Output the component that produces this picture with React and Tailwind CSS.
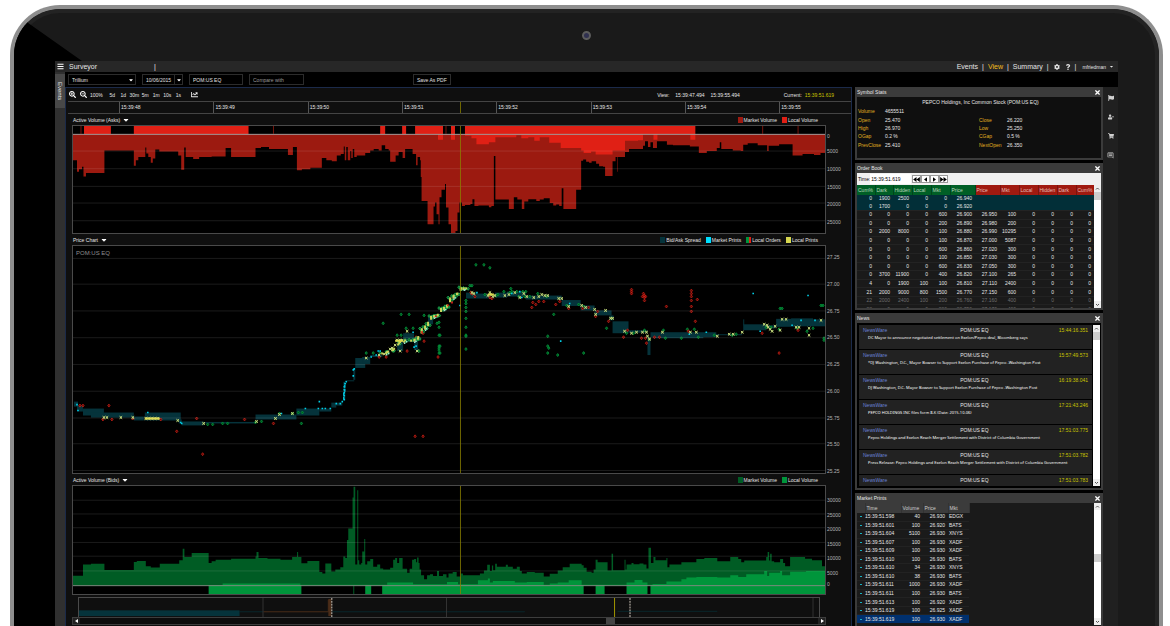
import React from "react";
import { FaSearchPlus, FaSearchMinus, FaCog, FaQuestion, FaFlag, FaUserMinus, FaShoppingCart, FaBars, FaChartLine, FaCaretDown, FaTimes } from "react-icons/fa";
import { MdOutlineInsertComment } from "react-icons/md";

const CURSOR_X = 388.5;

const ASK_MARKET = [
  0,35,4,46.5,6,44,9,41.5,10.5,51.5,13,48,31.5,25,61,40.5,63,35,65.5,31.5,72.5,22,73.5,28,75.5,31.5,78,37.5,80,33,82.5,24,86.5,26,105.5,30,108.5,44.5,111.5,22,113,31.5,120.5,33.5,126.5,31.5,139,31,153,22.5,158.5,31.5,183,22.5,188.5,21.5,196.5,23.5,215.5,29.5,220.5,21.5,224.5,45,229.5,44,238,42.5,249.5,32.5,254,35,259.5,36,264.5,30,268.5,28.5,271.5,21,272.5,35,274,21.5,275.5,35,278,25.5,279,32.5,280.5,23.5,282,31.5,284.5,30,293,27.5,298,25,301.5,23.5,306.5,25,309.5,19.5,313,23.5,316.5,25,318,36.5,323.5,30,326.5,26.5,330.5,32.5,333,23.5,340.5,28.5,344,40,345.5,31.5,348,35,348.7,52,349.5,76.5,355.5,100,361.5,82,363,78,364.5,90,366.5,100,367.5,72.5,369.5,65,373,59,374,83,376.5,100,379,109,383.5,107,385.5,88,387.5,78,390,81.5,393,80.5,398.5,79.5,400.5,74.5,402.5,81.5,406.5,81,417,82.7,419.5,81.5,422,30.5,423.5,75,437,84.5,442,72.5,445.5,75,450,84.5,452.5,77,456.5,74.5,464.5,76.5,468,75,472,73.5,478,78.5,481.5,81,484.5,80,487.5,81.5,490,63.5,491.7,84.5,504.5,65,509.5,35.5,511.5,34,514.5,36.5,517.5,37.5,520,36,524.5,38.5,527.5,41,531.5,41.5,533.5,51,541,36,544,31.5,545.5,46.5,546,31.5,553.5,26.5,557.5,23.5,571.5,20,573.5,15.5,576.5,21.5,579,16.5,581.5,22.5,585.5,15.5,595.5,19,601.5,19.5,618.5,21,627.5,27.5,635.5,25.5,645.5,22.5,648.5,16.5,650,23.5,661.5,25,669.5,25.5,672,19,676.5,17.5,686.5,19.5,696,25.5,697.5,20,708,18.5,721.5,30,731.5,28.5,743,29.5,749.5,27.5,754,8.5,
];
const ASK_LOCAL = [
  393,10,399.5,12.5,404.5,18.5,417,16.5,423.5,11.5,444.5,9.5,449.5,12.5,456.5,11.5,462.5,15,468,11.5,477.5,17,489,22.5,509.5,25,512,27.5,519.5,26,524,29,541,25,553.5,15,566.5,14.5,571.5,8.5,
];
const BID_MARKET = [
  0,91.5,10,80,18,79.3,31.5,85.5,61,77.3,64,76.3,73,81.7,78,83,87,79.3,106.5,75.5,110,64,111.7,72.3,119,68.3,136,78.3,139,76.7,143,75,158.5,74,183,71.7,184,67.3,186,73.3,195,74,208,75,219.7,72.3,224.7,67.3,225.7,72.3,229,78.7,235,76.3,247,87.7,250,89,253,79,259,87,263,85,268,82.7,271,71.7,273,73.3,274.7,55,276,43.3,280.3,11.7,281.3,0.7,283,80,285,4.3,286,75.7,287,80,289,78.3,290,66.7,292,54,293,80,295,76.7,298,74.3,301,82.3,305,80,308,84,311,85,318,83.3,321,75,323,73.3,325,78.3,327,73.3,330.5,84.3,335,88.3,337.5,84.3,340,75,342,74.3,344,77.7,345,72.7,346.5,78.3,347.5,85,349,91,352,95,355,91,358,90,361,91.7,365,86.7,367,91.7,371,90,374.5,93.3,376.5,89,380.7,87.7,384.7,92.3,388.7,89,391,91,408,89,412,86,415.3,80.3,418,86.7,420,81,421.3,85.7,423.3,79.3,425,82.3,434,80.3,436,82.3,441,84.3,445,82.3,448,86.7,450,89,455,87.7,463,88.3,472,92.3,478,89.3,486,86,491,82.7,498,79.3,510,80.7,512,83.3,515,87.3,520,88.3,522,85,524,75,526,77.7,536,86,540,69,541.5,85.7,553,75,554,85,555,80,560,78.3,562,79.7,568,79,572,80,575,84,577,63,579.5,78.3,582,72.3,584,75.7,595,73.3,596,82.7,598,80,610,77.7,625,74.3,633,73.3,646,76.7,659,72.3,667,74.3,670,77.7,673,76,695,72.3,696.5,67.3,698,76,699,69,700.5,76.7,703,77.7,709,74.3,712,78.3,714,81.7,719,72.3,734,74,741,75.7,751,81.7,754,100.7,
];
const BID_LOCAL = [
  150,99.3,228,100.7,315,98.3,341,100,375,97.7,386,100,406,96,416,94.3,418,98.3,421,96.7,443,98.3,455,97.7,472,100.7,478,99.3,486,98.3,497,96,510,100.7,555,98.3,563,95.7,571,98.3,576,100.7,581,99.7,595,97.3,610,95,615,93.3,625,92.7,646,93.3,659,91,667,92.7,675,90,693,86.7,696,91.7,698,88.3,709,86.7,711,91,719,87.3,735,86.7,754,100.7,
];

function stepPath(points, base) {
  let d = `M${points[0]} ${base}`;
  for (let i = 0; i < points.length; i += 2) d += `H${points[i]}V${points[i + 1]}`;
  return d + `V${base}Z`;
}

const SPREAD = [
  [1,157,4,5],[4,161,6,6],[10,164,21,7],[18,168,43,5],[61,172,10,4],[72,168,36,8],[106,175,3,4],[109,177,22,4],[131,177.5,52,1.5],[183,170,41,5],[224,164,23,7],[247,164,12,3],[259,158,5,5],[264,158,6,3],[271,137,2,18],[273,135.5,9,1],[281,123,2,12],[283,113,10,10],[290,112,8,7],[298,110,12,2],[325,95,6,11],[331,88,11,9],[342,95,4,10],[356,72,5,7],
  [394,47,11,6],[405,48,13,5],[423,47,12,5],[435,46,19,5],[454,50,36,4],[490,54.5,19,6],[509,60,14,5],[523,65,17,5],[538,70,4,5],[541,76,16,12],[557,85,19,2.5],[576,92,3,18],[579,87,66,5],[582,88,50,5],[645,89,26,1],[672,79,23,6],[695,80,10,3],[705,73.5,24,8],[720,73,22,6],[728,74,26,7],[672,74,1,6],
];

const CYAN = [
  [4,160],[5,166],[75,168],[108,178],[109,179],[209,169],[233,164],[247,157],[246,164],[250,164],[253,164],[258,164],[264,159],[268,159],[270,157],[272,155],[272,151],[272,148],[272,145],[272,142],[273,139],[274,137],[281,131],[281,125],[282,124],[299,112],[304,110],[306,106],[308,106],[342,102],[344,101],[341,87],[388,60],[405,47],[440,48],[448,46],[489,96],[682,48],[737,50],[730,75],[744,75],[618,89],[635,87],[450,52],[498,58],[689,86],[721,80],
];
const YELLOW = [
  [31,173],[34,173],[48,173],[60,173],[73,174],[76,174],[79,174],[82,174],[85,174],[105,176],[131,179],[184,177],[203,174],[207,170],[220,169],[294,113],[307,110],[312,109],[318,104],[320,103],[323,100],[325,95],[328,95],[330,95],[335,86],[328,106],[345,106],
  [400,47],[402,48],[416,50],[418,47],[419,49],[421,51],[423,50],[433,50],[437,49],[443,47],[448,52],[452,48],[455,51],[462,52],[467,51],[470,49],[473,50],[476,50],[487,53],[490,53],[497,61],[510,60],[514,62],[523,64],[524,69],[534,65],[539,73],[541,73],[553,86],[560,88],[565,87],[571,87],[575,87],[576,91],[578,94],[591,87],[619,87],[625,87],[646,91],[658,89],[662,89],[671,87],[693,79],[696,80],[697,82],[699,84],[701,86],[704,81],[711,74],[715,74],[725,82],[728,82],[738,83],[750,75],[738,90],[709,85],
];
const GREEN = [
  [135,180],[140,180],[150,179],[155,179],[183,178],[189,177],[207,169],[220,169],[226,168],[230,168],[229,179],[294,108],[301,108],[311,78],[325,90],[329,90],[329,69],[334,83],[337,69],[341,83],[352,70],[365,78],[367,77],[367,82],[367,90],[367,101],[367,103],[367,105],[367,108],[347,106],
  [404,19],[412,19],[418,22],[400,40],[398,40],[394,55],[394,58],[394,62],[394,66],[394,73],[394,82],[394,90],[394,91],[394,104],[432,46],[439,43],[440,46],[445,46],[451,46],[454,46],[424,50],[368,90],[368,101],[368,108],[476,91],[476,101],[477,103],[476,108],[486,110],[512,108],[482,69],[535,83],[540,73],[592,85],[594,93],[610,93],[616,84],[623,84],[627,92],[643,90],[665,89],[711,63],[709,63],[750,60],[752,60],[753,93],[753,95],[708,84],[736,86],[742,83],[495,60],[507,59],[447,51],[562,88],[578,94],[413,49],[426,49],[438,47],[453,51],[458,51],[466,48],[475,51],[512,61],[555,88],[573,85],[661,90],[695,82],[700,82],[726,83],
];
const RED = [
  [7,161],[10,161],[36,161],[30,175],[39,175],[60,174],[88,175],[104,187],[124,174],[130,210],[172,175],[201,179],[307,112],[314,112],[335,106],[344,92],[352,96],[351,88],[366,112],[343,192],[351,192],
  [399,47],[400,48],[403,51],[418,52],[420,53],[460,62],[461,57],[464,59],[467,56],[472,56],[484,59],[488,56],[497,63],[511,63],[517,62],[524,71],[526,66],[537,76],[552,92],[556,85],[570,93],[574,93],[575,98],[583,92],[588,92],[560,44],[560,46],[560,48],[572,48],[574,51],[573,50],[573,52],[573,55],[571,51],[595,61],[620,45],[620,48],[620,51],[620,55],[620,61],[620,66],[626,54],[624,76],[617,86],[691,88],[727,85],[708,108],
];

function trail() {
  const line = [[340,97],[346,92],[352,84],[357,76],[362,71],[368,67],[373,62],[378,56],[384,48],[390,44],[394,42]];
  const out = [];
  for (let i = 0; i < line.length - 1; i++) {
    const [ax, ay] = line[i];
    const [bx, by] = line[i + 1];
    for (let k = 0; k < 5; k++) {
      const t = k / 5;
      const n = (i * 7 + k * 5) % 9;
      out.push([ax + (bx - ax) * t, ay + (by - ay) * t, n]);
    }
  }
  for (let k = 0; k < 12; k++) out.push([311 + k * 2, 110 - k * 1.3, (k * 5) % 9]);
  return out;
}

const squares = (pts, s) => pts.map(([x, y]) => `M${x - s / 2} ${y - s / 2}h${s}v${s}h${-s}z`).join("");
const rings = (pts) => pts.map(([x, y]) => `M${x - 1.2} ${y}l1.2 -1.5l1.2 1.5l-1.2 1.5z`).join("");
const crosses = (pts) => pts.map(([x, y]) => `M${x - 1.3} ${y - 1.3}l2.6 2.6m0 -2.6l-2.6 2.6`).join("");

function Plot({ height, className, grid, label, children }) {
  return (
    <svg role="img" aria-label={label} viewBox={`0 0 754 ${height}`} preserveAspectRatio="none" className={`block min-w-0 flex-1 border border-[#4a4a4a] bg-black ${className}`}>
      {children}
      {grid.map((y) => <path key={y} d={`M0 ${y}H754`} stroke="#ffffff" strokeOpacity="0.11" />)}
      <path d={`M${CURSOR_X} 0V${height}`} stroke="#8a8000" strokeOpacity="0.8" />
    </svg>
  );
}

function ChartHead({ title, legend }) {
  return (
    <div className="mr-[26px] flex h-[11px] items-center justify-between">
      <button className="flex items-center gap-[2px] pl-px">
        {title}
        <FaCaretDown className="size-[8px] text-white" />
      </button>
      <ul className="flex gap-[5px] pr-[7px]">
        {legend.map(([name, swatch]) => (
          <li key={name} className="flex items-center gap-px">
            <span className={`h-[6px] w-[5px] ${swatch}`} />
            {name}
          </li>
        ))}
      </ul>
    </div>
  );
}

function Scale({ className, values }) {
  return (
    <ul className={`flex w-[25px] shrink-0 flex-col justify-between pl-px text-[#b5b5b5] ${className}`}>
      {values.map((v) => <li key={v} className="h-[6px] leading-[6px]">{v}</li>)}
    </ul>
  );
}

function PriceMarks() {
  const t = trail();
  return (
    <>
      {SPREAD.map(([x, y, w, h], i) => <rect key={i} x={x} y={y} width={w} height={h} fill="#05333b" />)}
      <path d={rings(GREEN)} fill="#00591f" stroke="#00953b" strokeWidth="0.8" />
      <path d={rings(RED)} fill="#5c0c08" stroke="#d61f16" strokeWidth="0.7" />
      <path d={rings(t.map(([x, y, n]) => [x + (n % 3) * 3 - 3, y + (n % 4) * 1.6 - 2.4]))} fill="#006b2a" stroke="#1c9c4a" strokeWidth="1" />
      <path d={squares(CYAN, 1.6)} fill="#00d0e8" />
      <path d="M271.5 155V148M272.5 147V138" stroke="#00c4dc" strokeWidth="1.4" strokeDasharray="3 1" />
      <path d={squares(YELLOW, 2)} fill="#7f9a4a" />
      <path d={crosses(YELLOW)} stroke="#c3d67c" strokeWidth="1" />
      <path d={squares(t.map(([x, y, n]) => [x + (n % 3) - 1, y + (n % 4) - 1.5]), 2)} fill="#c9d35a" />
      <path d={squares(t.filter((p) => p[2] % 4 === 1).map(([x, y]) => [x + 1.5, y + 1]), 1.5)} fill="#9fe8d0" />
      <path d={squares([[376,60],[380,57],[350,87],[364,71]], 1.8)} fill="#d61f16" />
      <path d="M72 174H87M323 95.5H331M416 49H422" stroke="#dcd94e" strokeWidth="2" />
    </>
  );
}

function Panel({ title, className, children }) {
  return (
    <section className={`border-2 border-t-0 border-[#3b3b3b] bg-[#1a1a1a] ${className}`}>
      <header className="flex h-[10px] items-center justify-between bg-[#3b3b3b]">
        <h2>{title}</h2>
        <button aria-label={`Close ${title}`} className="text-white"><FaTimes className="size-[7px]" /></button>
      </header>
      {children}
    </section>
  );
}

function ScrollTrack({ thumb }) {
  return (
    <div aria-hidden="true" className="flex w-[7px] shrink-0 flex-col items-center bg-white">
      <svg viewBox="0 0 7 7" className="size-[7px] shrink-0 bg-[#eeeeee]"><path d="M2 4.5L3.5 3L5 4.5" fill="none" stroke="#555" /></svg>
      <div className={`w-full bg-[#cdcdcd] ${thumb}`} />
      <svg viewBox="0 0 7 7" className="mt-auto size-[7px] shrink-0 bg-[#eeeeee]"><path d="M2 3L3.5 4.5L5 3" fill="none" stroke="#555" /></svg>
    </div>
  );
}

const STATS = [
  ["Volume", "4655511", "", ""],
  ["Open", "25.470", "Close", "26.220"],
  ["High", "26.970", "Low", "25.250"],
  ["OGap", "0.2 %", "CGap", "0.5 %"],
  ["PrevClose", "25.410", "NextOpen", "26.350"],
];

const BOOK_HEAD = ["Cum%", "Dark", "Hidden", "Local", "Mkt", "Price", "Price", "Mkt", "Local", "Hidden", "Dark", "Cum%"];
const BOOK_COLS = ["w-[18px]", "w-[18px]", "w-[19px]", "w-[19px]", "w-[19px]", "w-[25px]", "w-[25px]", "w-[19px]", "w-[19px]", "w-[19px]", "w-[19px]", "w-[18px]"];
const BOOK = [
  "0 1900 2500 0 0 26.940",
  "0 1700 0 0 0 26.920",
  "0 0 0 0 600 26.900 26.950 100 0 0 0 0",
  "0 0 0 0 200 26.890 26.980 200 0 0 0 0",
  "0 2000 8000 0 100 26.880 26.990 10295 0 0 0 0",
  "0 0 0 0 100 26.870 27.000 5087 0 0 0 0",
  "0 0 0 0 600 26.860 27.020 300 0 0 0 0",
  "0 0 0 0 100 26.850 27.030 300 0 0 0 0",
  "0 0 0 0 600 26.830 27.050 300 0 0 0 0",
  "0 3700 11900 0 400 26.820 27.100 265 0 0 0 0",
  "4 0 1900 100 100 26.810 27.110 2400 0 0 0 0",
  "21 2000 9000 800 1500 26.770 27.150 600 0 0 0 0",
  "22 2000 2400 100 200 26.760 27.160 400 0 0 0 0",
  "23 0 0 0 200 26.750 27.170 400 0 0 0 0",
].map((r) => r.split(" "));

const NEWS = [
  ["15:44:16.351", "DC Mayor to announce negotiated settlement on Exelon/Pepco deal, Bloomberg says"],
  ["15:57:49.573", "*DJ Washington, D.C., Mayor Bowser to Support Exelon Purchase of Pepco -Washington Post"],
  ["16:19:38.041", "DJ Washington, D.C. Mayor Bowser to Support Exelon Purchase of Pepco -Washington Post"],
  ["17:21:43.246", "PEPCO HOLDINGS INC files form 8-K (Date: 2015-10-06)"],
  ["17:51:03.775", "Pepco Holdings and Exelon Reach Merger Settlement with District of Columbia Government"],
  ["17:51:03.782", "Press Release: Pepco Holdings and Exelon Reach Merger Settlement with District of Columbia Government"],
  ["17:51:03.783", "Press Release: Pepco Holdings and Exelon Reach -2"],
];

const PRINTS = [
  "598 40 26.930 EDGX", "601 100 26.920 BATS", "604 5100 26.930 XNYS", "607 100 26.930 XADF", "609 100 26.930 XADF",
  "610 100 26.930 BATS", "610 34 26.930 XNYS", "610 38 26.930 BATS", "611 1000 26.930 XADF", "611 100 26.930 BATS",
  "613 100 26.920 XADF", "619 100 26.925 XADF", "619 100 26.930 XADF",
].map((r) => r.split(" "));

const TICKS = ["15:39:48", "15:39:49", "15:39:50", "15:39:51", "15:39:52", "15:39:53", "15:39:54"];
const RANGES = ["5d", "1d", "30m", "5m", "1m", "10s", "1s"];

function TopBar() {
  const sep = <span aria-hidden="true">|</span>;
  return (
    <header className="flex h-[11px] items-center bg-[#272727] pr-[4px] text-[7px] text-[#e4e4e4]">
      <button aria-label="Menu" className="flex w-[10px] justify-center text-white"><FaBars className="size-[7px]" /></button>
      <h1 className="pl-[4px]">Surveyor</h1>
      <span aria-hidden="true" className="ml-[57px]">|</span>
      <nav className="ml-auto flex items-center gap-[4px]">
        <a href="#events">Events</a>{sep}
        <a href="#view" className="text-[#f2bd1d]">View</a>{sep}
        <a href="#summary">Summary</a>{sep}
        <button aria-label="Settings" className="px-px"><FaCog className="size-[6px]" /></button>
        <button aria-label="Help"><FaQuestion className="size-[6px]" /></button>{sep}
        <button className="flex items-center gap-[3px] pl-[2px] text-[5px]">mfriedman <FaCaretDown className="size-[5px]" /></button>
      </nav>
    </header>
  );
}

function ToolBar() {
  const field = "h-[11px] border border-[#2c2c2c] bg-black px-[3px] text-[#e0e0e0]";
  return (
    <div className="flex h-[15px] items-center gap-[6px] bg-black pl-[13px]">
      <div className="relative">
        <select aria-label="Firm" className={`${field} block w-[68px] appearance-none`}><option>Trillium</option></select>
        <FaCaretDown className="pointer-events-none absolute top-[3px] right-[2px] size-[6px] text-white" />
      </div>
      <div className="relative">
        <select aria-label="Date" className={`${field} block w-[41px] appearance-none`}><option>10/06/2015</option></select>
        <span className="pointer-events-none absolute top-px right-px flex h-[9px] w-[8px] items-center justify-center border-l border-[#2c2c2c]"><FaCaretDown className="size-[6px] text-white" /></span>
      </div>
      <input aria-label="Symbol" defaultValue="POM:US EQ" className={`${field} w-[54px]`} />
      <input aria-label="Compare with" placeholder="Compare with" className={`${field} w-[55px] placeholder:text-[#9a9a9a]`} />
      <button className={`${field} ml-[103px]`}>Save As PDF</button>
    </div>
  );
}

function Charts() {
  return (
    <main className="min-w-0 flex-1 border-x border-t border-[#1b2a4a] bg-[#0f0f0f] pl-[2px]">
      <div className="flex h-[13px] items-center pr-[17px] pl-px">
        <button aria-label="Zoom in" className="text-white"><FaSearchPlus className="size-[7px]" /></button>
        <button aria-label="Zoom out" className="ml-[4px] text-white"><FaSearchMinus className="size-[7px]" /></button>
        <button className="mr-[4px] ml-[3px]">100%</button>
        {RANGES.map((r) => <button key={r} className="w-[11px] text-center">{r}</button>)}
        <button aria-label="Chart type" className="ml-[7px]"><FaChartLine className="size-[7px]" /></button>
        <p className="ml-auto flex">
          <span className="mr-[6px]">View:</span>
          <time className="mr-[6px]">15:39:47.494</time>
          <time className="mr-[44px]">15:39:55.494</time>
          <span className="mr-[3px]">Current:</span>
          <time className="text-[#c9c400]">15:39:51.619</time>
        </p>
      </div>
      <ol className="flex h-[13px] border-y border-[#444444] leading-[10px]">
        <li className="grow-[52] basis-0" />
        {TICKS.map((t) => (
          <li key={t} className="relative grow-[94] basis-0 border-l border-[#555555] pl-px">
            {t}
            {t === "15:39:51" && <span className="absolute inset-y-0 left-[61%] w-px bg-[#6e6600]" />}
          </li>
        ))}
        <li className="grow-[71] basis-0 border-l border-[#555555] pl-px">15:39:55</li>
      </ol>

      <div className="pl-[4px]">
        <ChartHead title="Active Volume (Asks)" legend={[["Market Volume", "bg-[#9e1a10]"], ["Local Volume", "bg-[#e02015]"]]} />
        <div className="flex">
          <Plot label="Active ask volume" height={109} className="h-[109px]" grid={[25.5, 43.5, 61.5, 78.5, 96.5]}>
            <path d={stepPath(ASK_MARKET, 8.5)} fill="#9c1a10" />
            <path d={stepPath(ASK_LOCAL, 8.5)} fill="#e02015" />
            <path d="M11 0h27v8.5h-27zM61 0h115v8.5h-115zM308 0h5v8.5h-5zM330 0h4v8.5h-4zM343 0h28v8.5h-28zM379 0h4v14h-4zM393 0h231v8.5h-231zM366 8h5v6h-5zM582 8h4v6h-4zM619 8h5v6h-5z" fill="#e02015" />
            <path d="M8 0V8M201 0V8M374 0V8M691.500 0V8M727 0V8" stroke="#7a150d" />
            <path d="M0 8.5H754" stroke="#a59a98" strokeWidth="1" />
          </Plot>
          <div className="shrink-0">
            <Scale className="h-[14px] pt-[8px]" values={["0"]} />
            <Scale className="mt-[9px] h-[77px]" values={["5000", "10000", "15000", "20000", "25000"]} />
          </div>
        </div>

        <ChartHead title="Price Chart" legend={[["Bid/Ask Spread", "bg-[#05333b]"], ["Market Prints", "bg-[#00e0ff]"], ["Local Orders", "bg-linear-to-r from-[#00953b] from-50% to-[#e02015] to-50%"], ["Local Prints", "bg-[#d8d850]"]]} />
        <div className="relative flex">
          <Plot label="Price chart" height={229} className="h-[229px]" grid={[12.5, 38.5, 65.5, 92.5, 119.5, 146.5, 173.5, 199.5, 226.5]}>
            <PriceMarks />
          </Plot>
          <Scale className="mt-[9px] h-[220px]" values={["27.25", "27.00", "26.75", "26.50", "26.25", "26.00", "25.75", "25.50", "25.25"]} />
          <p className="absolute top-[4px] left-[4px] text-[6px] text-[#8f8f8f]">POM:US EQ</p>
        </div>

        <ChartHead title="Active Volume (Bids)" legend={[["Market Volume", "bg-[#005c24]"], ["Local Volume", "bg-[#00953b]"]]} />
        <div className="flex">
          <Plot label="Active bid volume" height={110} className="h-[110px]" grid={[14.5, 28.5, 42.5, 57.5, 71.5, 86.5]}>
            <path d={stepPath(BID_MARKET, 101)} fill="#005c24" />
            <path d={stepPath(BID_LOCAL, 101)} fill="#00953b" />
            <path d="M136 101h93v9h-93zM293 101h6v9h-6zM310 101h202v9h-202zM524 101h9v9h-9zM555 101h21v9h-21zM579 101h175v9h-175z" fill="#00953b" />
            <path d="M281.500 101v9" stroke="#005c24" />
            <path d="M0 101.500H754" stroke="#7b8f80" strokeWidth="1" />
          </Plot>
          <div className="shrink-0">
            <Scale className="mt-[12px] h-[79px]" values={["30000", "25000", "20000", "15000", "10000", "5000"]} />
            <Scale className="mt-[5px] h-[6px]" values={["0"]} />
          </div>
        </div>

        <div className="mt-[2px] mr-[25px]">
          <svg role="img" aria-label="Session overview" viewBox="0 0 742 20" preserveAspectRatio="none" className="mx-[6px] block h-[20px] w-[calc(100%-12px)] border border-b-0 border-[#4a4a4a]">
            <rect x="0" y="13" width="161" height="6" fill="#05333b" />
            <path d="M161 14.500H185M254 14.500H447M540 14H640" stroke="#06323a" strokeWidth="0.7" />
            <path d="M185 14.500H250V2" fill="none" stroke="#4a2c18" />
            <path d="M184.500 0V20M368.500 0V20M736 0V20" stroke="#333333" />
            <rect x="250" y="1" width="3" height="18" fill="#4a2c18" />
            <path d="M253.500 0V20M552.500 0V20" stroke="#d8cfc4" strokeDasharray="2 1" />
            <path d="M537 0V20" stroke="#a69a00" />
          </svg>
          <div className="flex h-[8px] items-center border border-[#3d3d3d] bg-[#0c0c0c]">
            <button aria-label="Scroll left" className="flex h-full w-[7px] items-center justify-center bg-[#222222]"><svg viewBox="0 0 4 4" className="size-[4px]"><path d="M3 0V4L0 2z" fill="#fff" /></svg></button>
            <span className="ml-[70%] h-full w-[9px] bg-[#444444]" />
            <button aria-label="Scroll right" className="ml-auto flex h-full w-[7px] items-center justify-center bg-[#222222]"><svg viewBox="0 0 4 4" className="size-[4px]"><path d="M1 0V4L4 2z" fill="#fff" /></svg></button>
          </div>
        </div>
      </div>
    </main>
  );
}

function SymbolStats() {
  return (
    <Panel title="Symbol Stats" className="h-[73px]">
      <div className="h-[61px] bg-[#0f0f0f] pt-px">
        <p className="pl-[3px] text-center leading-[9px]">PEPCO Holdings, Inc Common Stock (POM:US EQ)</p>
        <dl className="grid h-[42px] auto-rows-fr grid-cols-[27px_94px_28px_1fr] items-center pl-px">
          {STATS.flatMap((row, i) => row.map((cell, j) => j % 2 === 0
            ? <dt key={`${i}-${j}`} className="text-[#e0b020]">{cell}</dt>
            : <dd key={`${i}-${j}`}>{cell}</dd>))}
        </dl>
      </div>
    </Panel>
  );
}

function OrderBook() {
  const step = "flex h-[8px] w-[9px] items-center justify-center border border-[#9a9a9a] bg-white";
  return (
    <Panel title="Order Book" className="h-[147px] overflow-hidden">
      <div className="flex h-[12px] items-center bg-[#f0f0f0] pl-px text-black">
        <label htmlFor="book-time">Time:</label>
        <input id="book-time" defaultValue="15:39:51.619" className="mr-px h-[10px] w-[41px] bg-white pl-px" />
        <button aria-label="First" className={step}><svg viewBox="0 0 8 6" className="h-[5px] w-[7px]"><path d="M4 0V6L0 3zM8 0V6L4 3z" /></svg></button>
        <button aria-label="Previous" className={step}><svg viewBox="0 0 4 6" className="h-[5px] w-[3px]"><path d="M4 0V6L0 3z" /></svg></button>
        <button aria-label="Next" className={step}><svg viewBox="0 0 4 6" className="h-[5px] w-[3px]"><path d="M0 0V6L4 3z" /></svg></button>
        <button aria-label="Last" className={step}><svg viewBox="0 0 8 6" className="h-[5px] w-[7px]"><path d="M0 0V6L4 3zM4 0V6L8 3z" /></svg></button>
      </div>
      <div className="flex h-[123px] overflow-hidden">
        <div className="min-w-0 flex-1">
          <table className="h-[128px] w-full table-fixed leading-[7px]">
            <colgroup>{BOOK_COLS.map((c, i) => <col key={i} className={c} />)}</colgroup>
            <thead>
              <tr className="h-[10px]">
                {BOOK_HEAD.map((h, i) => (
                  <th key={i} className={`p-0 pl-px text-left font-normal whitespace-nowrap ${i < 6 ? "border-r border-[#00461a] bg-[#005f26] text-[#b8d4bf]" : "border-r border-[#7c130b] bg-[#a01a10] text-[#e3bdb8]"}`}>{h}</th>
                ))}
              </tr>
            </thead>
            <tbody>
              {BOOK.map((row, i) => (
                <tr key={i} className={i < 2 ? "bg-[#022f38]" : i > 11 ? "border-t border-[#222222] text-[#6e6e6e]" : "border-t border-[#232323]"}>
                  {BOOK_HEAD.map((_, j) => <td key={j} className="p-0 pr-[3px] text-right">{row[j]}</td>)}
                </tr>
              ))}
            </tbody>
          </table>
        </div>
        <ScrollTrack thumb="h-[8px]" />
      </div>
    </Panel>
  );
}

function News() {
  return (
    <Panel title="News" className="h-[177px] overflow-hidden">
      <div className="flex h-[165px] overflow-hidden border-2 border-r-0 border-black bg-black pr-px">
        <ul className="min-w-0 flex-1 pr-px">
          {NEWS.map(([time, text]) => (
            <li key={time} className="mb-px h-[24px] bg-[#222222] px-[4px] pt-[2px]">
              <div className="flex justify-between leading-[7px]">
                <a href="#newsware" className="w-[27px] text-[#6a82d8]">NewsWare</a>
                <span>POM:US EQ</span>
                <time className="text-[#c9c400]">{time}</time>
              </div>
              <p className="pl-[5px] [font-family:'Noto_Sans','Liberation_Sans',sans-serif] text-[4px] leading-[7px] whitespace-nowrap text-white">{text}</p>
            </li>
          ))}
        </ul>
        <ScrollTrack thumb="h-[8px]" />
      </div>
    </Panel>
  );
}

function MarketPrints() {
  return (
    <Panel title="Market Prints" className="h-[140px] overflow-hidden">
      <div className="flex h-[128px] items-start overflow-hidden">
        <table className="h-[120px] w-[112px] table-fixed leading-[7px]">
          <colgroup><col className="w-[8px]" /><col className="w-[36px]" /><col className="w-[22px]" /><col className="w-[25px]" /><col className="w-[21px]" /></colgroup>
          <thead>
            <tr className="h-[10px] bg-[#3b3b3b] text-[#cccccc]">
              {["", "Time", "Volume", "Price", "Mkt"].map((h) => <th key={h} className="border-r border-[#333333] p-0 pl-px text-left font-normal">{h}</th>)}
            </tr>
          </thead>
          <tbody>
            {PRINTS.map(([ms, vol, price, mkt], i) => (
              <tr key={i} className={i === 12 ? "bg-[#00306e]" : "border-b border-[#222222]"}>
                <td className="p-0 pl-[3px]"><span className="block h-px w-[2px] bg-[#17b3c4]" /></td>
                <td className="p-0">15:39:51.{ms}</td>
                <td className="p-0 pr-[3px] text-right">{vol}</td>
                <td className="p-0 pr-[3px] text-right">{price}</td>
                <td className="p-0 pl-px">{mkt}</td>
              </tr>
            ))}
          </tbody>
        </table>
        <div className="ml-auto flex h-[122px]"><ScrollTrack thumb="mt-[44px] h-[8px]" /></div>
      </div>
    </Panel>
  );
}

export default function App() {
  return (
    <div className="h-screen overflow-hidden bg-white pt-[5px] pr-[7px] pl-[10px] [font-family:'Liberation_Sans',sans-serif] text-[5px] leading-[8px] text-[#e6e6e6]">
      <div className="relative h-full overflow-hidden rounded-t-[50px] border-x-4 border-t-4 border-[#8e8e8e] bg-[#1a1a1a]">
        <div className="absolute inset-0 rounded-t-[46px] border-x-4 border-t-4 border-[#232323]" />
        <div className="absolute inset-y-0 left-0 w-[70px] bg-black [clip-path:polygon(0_4px,68px_52px,41px_52px,41px_100%,0_100%)]" />
        <div className="relative flex h-[52px] items-center justify-center">
          <span className="size-[9px] rounded-full border-2 border-[#5c5c5c] bg-[#2f3050]" />
        </div>
        <div className="relative mx-[41px] bg-black">
          <TopBar />
          <ToolBar />
          <div className="flex">
            <aside className="-mt-[15px] w-[10px] shrink-0 bg-[#303030] pt-[2px]">
              <button className="flex h-[34px] w-full items-center justify-center bg-[#484848] text-[6px] [writing-mode:vertical-rl]">Events</button>
            </aside>
            <Charts />
            <div className="ml-[3px] flex w-[248px] shrink-0 flex-col gap-[3px]">
              <SymbolStats />
              <OrderBook />
              <News />
              <MarketPrints />
            </div>
            <aside className="flex w-[15px] shrink-0 flex-col items-center gap-[13px] bg-[#202020] pt-[8px] text-[#d0d0d0]">
              <button aria-label="Flags"><FaFlag className="size-[6px]" /></button>
              <button aria-label="Users"><FaUserMinus className="size-[6px]" /></button>
              <button aria-label="Cart"><FaShoppingCart className="size-[6px]" /></button>
              <button aria-label="Comments"><MdOutlineInsertComment className="size-[7px]" /></button>
            </aside>
          </div>
        </div>
      </div>
    </div>
  );
}
